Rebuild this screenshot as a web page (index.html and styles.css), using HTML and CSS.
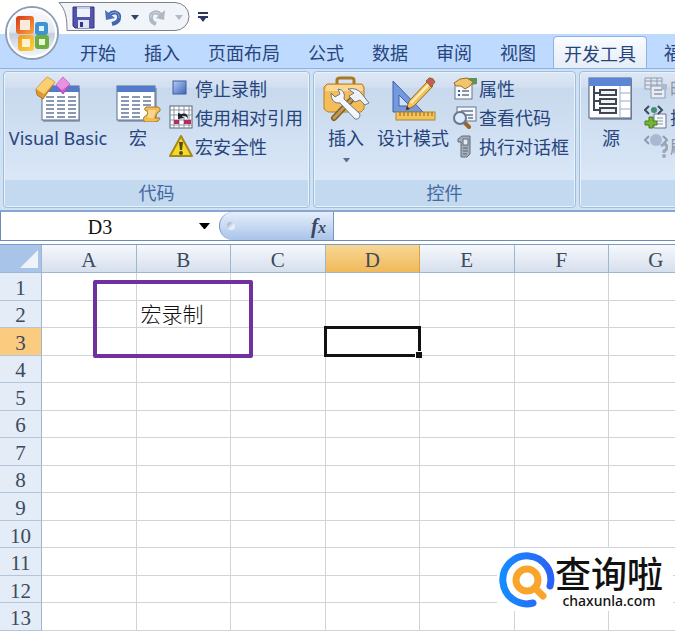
FILE: index.html
```html
<!DOCTYPE html>
<html lang="zh-CN">
<head>
    <meta charset="UTF-8">
    <meta name="viewport" content="width=device-width, initial-scale=1.0">
    <title>宏录制</title>
    <link rel="stylesheet" href="styles.css">
</head>
<body>
    <!-- 标题栏 -->
    <header class="titlebar">
        <button class="office-btn" aria-label="Office">
            <svg width="56" height="56" viewBox="0 0 56 56">
                <defs>
                    <linearGradient id="orb" x1="0" y1="0" x2="0" y2="1">
                        <stop offset="0" stop-color="#fdfdfe"/>
                        <stop offset=".48" stop-color="#e3e8f0"/>
                        <stop offset=".52" stop-color="#c3cedf"/>
                        <stop offset="1" stop-color="#fafcff"/>
                    </linearGradient>
                    <linearGradient id="red" x1="0" y1="0" x2="1" y2="1">
                        <stop offset="0" stop-color="#d9421c"/>
                        <stop offset="1" stop-color="#f59a3c"/>
                    </linearGradient>
                    <linearGradient id="yellow" x1="0" y1="0" x2="1" y2="1">
                        <stop offset="0" stop-color="#f2a024"/>
                        <stop offset="1" stop-color="#fccb3e"/>
                    </linearGradient>
                </defs>
                <circle cx="28" cy="28" r="26" fill="url(#orb)" stroke="#8f9db3" stroke-width="2"/>
                <circle cx="28" cy="28" r="24" fill="none" stroke="#fff" stroke-width="2"/>
                <rect x="14" y="13" width="14" height="14" rx="1" fill="#fbe9dc" stroke="url(#red)" stroke-width="4"/>
                <rect x="33" y="19" width="9" height="9" rx="1" fill="#e2f1fb" stroke="#3d94d0" stroke-width="4"/>
                <rect x="16" y="32" width="12" height="12" rx="1" fill="#fdf2cf" stroke="url(#yellow)" stroke-width="4"/>
                <rect x="33" y="32" width="10" height="10" rx="1" fill="#e9f5dc" stroke="#6fad3f" stroke-width="4"/>
            </svg>
        </button>
        <div class="quick-access">
            <svg class="quick-bg" width="132" height="30" viewBox="0 0 132 30">
                <path d="M1 .5H117A14 14 0 0 1 117 28.500H9C9 17 8 8 1 .5Z" fill="#f1f4f8" stroke="#7c828c"/>
            </svg>
            <button aria-label="保存">
                <svg width="23" height="23" viewBox="0 0 23 23">
                    <path d="M1 1H22V22H3L1 20Z" fill="#5355ad" stroke="#34357f"/>
                    <path d="M5 1H18V11H5Z" fill="#eef2fc"/>
                    <path d="M5 1H18V3H5Z" fill="#c5cdea"/>
                    <path d="M6 14H17V22H6Z" fill="#dfe3f2"/>
                    <path d="M8 16H11V21H8Z" fill="#34357f"/>
                </svg>
            </button>
            <button aria-label="撤消">
                <svg width="20" height="20" viewBox="0 0 20 20">
                    <path d="M6 8C11 3 17 6 16 11C16 14 13 16 9 17" fill="none" stroke="#3f66b0" stroke-width="4"/>
                    <path d="M6 8C11 3 17 6 16 11" fill="none" stroke="#86a8dc" stroke-width="1"/>
                    <path d="M2 3L3 13L12 11Z" fill="#4a72bb"/>
                </svg>
            </button>
            <button aria-label="撤消列表">
                <svg width="8" height="5" viewBox="0 0 8 5"><path d="M0 0H8L4 5Z" fill="#2f4470"/></svg>
            </button>
            <button aria-label="恢复">
                <svg width="20" height="20" viewBox="0 0 20 20">
                    <path d="M14 8C9 3 3 6 4 11C4 14 6 16 9 17" fill="none" stroke="#aeb7c4" stroke-width="4"/>
                    <path d="M14 8C9 3 3 6 4 11" fill="none" stroke="#d4dae3" stroke-width="1"/>
                    <path d="M18 3L17 13L9 11Z" fill="#aeb7c4"/>
                </svg>
            </button>
            <button aria-label="恢复列表">
                <svg width="8" height="5" viewBox="0 0 8 5"><path d="M0 0H8L4 5Z" fill="#b5b9c0"/></svg>
            </button>
        </div>
        <button class="customize" aria-label="自定义快速访问工具栏">
            <svg width="10" height="10" viewBox="0 0 10 10"><path d="M0 0H10V2H0ZM0 4H10V6H8L5 10L2 6H0Z" fill="#2b3760"/></svg>
        </button>
    </header>

    <!-- 选项卡 -->
    <nav class="tabs">
        <button>开始</button>
        <button>插入</button>
        <button>页面布局</button>
        <button>公式</button>
        <button>数据</button>
        <button>审阅</button>
        <button>视图</button>
        <button class="active">开发工具</button>
        <button>福</button>
    </nav>

    <!-- 功能区 -->
    <div class="ribbon">
        <section class="group">
            <div class="group-body">
                <button class="big vb">
                    <svg width="48" height="46" viewBox="0 0 48 46">
                        <path d="M9 12H46V46H9Z" fill="#98a5ba"/>
                        <rect x="8" y="10" width="37" height="34" fill="#fff" stroke="#5b6c8c"/>
                        <rect x="8" y="10" width="37" height="6" fill="#527bcb"/>
                        <path d="M12 21h8M12 25h8M12 29h8M12 33h8M12 37h8M12 41h8M23 21h8M23 25h8M23 29h8M23 33h8M23 37h8M23 41h8M34 21h8M34 25h8M34 29h8M34 33h8M34 37h8M34 41h8" stroke="#8a98b4" stroke-width="2"/>
                        <path d="M2 13L13 1L21 6L9 23L3 19Z" fill="#dc9c2c" stroke="#b27b20"/>
                        <path d="M2 13L13 1L21 6L10 18Z" fill="#fbce74"/>
                        <path d="M22 9L29 1L36 8L29 18Z" fill="#d05cc8" stroke="#b64ab0"/>
                        <path d="M22 9L29 1L36 8L28 14Z" fill="#ea92e2"/>
                    </svg>
                    <span>Visual Basic</span>
                </button>
                <button class="big macro">
                    <svg width="46" height="46" viewBox="0 0 46 46">
                        <path d="M3 12H42V46H3Z" fill="#98a5ba"/>
                        <rect x="2" y="10" width="38" height="34" fill="#fff" stroke="#5b6c8c"/>
                        <rect x="2" y="10" width="38" height="6" fill="#527bcb"/>
                        <path d="M6 21h8M6 25h8M6 29h8M6 33h8M6 37h8M6 41h8M17 21h8M17 25h8M17 29h8M17 33h8M17 37h8M17 41h8M28 21h8M28 25h8M28 29h8" stroke="#8a98b4" stroke-width="2"/>
                        <path d="M31 31H43Q46 32 45 35L42 37L40 42H45Q44 46 40 46H30Q27 44 29 41L32 39L33 35H31Q28 33 31 31Z" fill="#f0bd58" stroke="#a97a27"/>
                        <path d="M33 34H41L38 42H33Z" fill="#fad68c"/>
                    </svg>
                    <span>宏</span>
                </button>
                <div class="stack">
                    <button>
                        <svg width="24" height="24" viewBox="0 0 24 24">
                            <defs><linearGradient id="stop" x1="0" y1="0" x2="1" y2="1"><stop offset="0" stop-color="#b5ccf5"/><stop offset="1" stop-color="#3c65b8"/></linearGradient></defs>
                            <rect x="4" y="5" width="13" height="13" fill="url(#stop)" stroke="#3f5f9f"/>
                        </svg>
                        <span>停止录制</span>
                    </button>
                    <button>
                        <svg width="24" height="24" viewBox="0 0 24 24">
                            <rect x="1" y="1" width="22" height="22" fill="#fff" stroke="#5c6375"/>
                            <path d="M5 1V23M10 1V23M15 1V23M20 1V23M1 5H23M1 10H23M1 15H23M1 20H23" stroke="#8b93a5"/>
                            <path d="M5 15H10V19H5ZM15 15H22V19H15Z" fill="#b72c5d"/>
                            <path d="M9 8V14L15 13L13 11Q17 10 19 14Q19 7 12 9Z" fill="#20232d"/>
                        </svg>
                        <span>使用相对引用</span>
                    </button>
                    <button>
                        <svg width="24" height="24" viewBox="0 0 24 24">
                            <path d="M12 2L23 22H1Z" fill="#f5d828" stroke="#a48a18" stroke-linejoin="round" stroke-width="2"/>
                            <path d="M10 8H14L13 16H11Z" fill="#554d20"/>
                            <circle cx="12" cy="19" r="2" fill="#554d20"/>
                        </svg>
                        <span>宏安全性</span>
                    </button>
                </div>
            </div>
            <h2>代码</h2>
        </section>

        <section class="group">
            <div class="group-body">
                <button class="big insert">
                    <svg width="48" height="46" viewBox="0 0 48 46">
                        <path d="M15 9V4Q15 2 18 2H29Q32 2 32 4V9" fill="none" stroke="#ad7823" stroke-width="3"/>
                        <path d="M5 8H40L42 11V33L39 36H6L2 33V11Z" fill="#f4bd58" stroke="#b57e25"/>
                        <path d="M5 9H40L41 15H3Z" fill="#fbd895"/>
                        <path d="M12 42L31 22" stroke="#7c6233" stroke-width="6" stroke-linecap="round"/>
                        <path d="M12 42L31 22" stroke="#c29a50" stroke-width="3" stroke-linecap="round"/>
                        <path d="M26 13Q35 11 40 18L47 27L43 29L38 24L33 26L27 20L32 17Z" fill="#eef2f7" stroke="#70798a"/>
                        <path d="M9 17L13 21L18 18L16 13Q24 14 22 23L38 38Q38 44 33 43L18 27Q9 28 9 17Z" fill="#f5f7fa" stroke="#70798a"/>
                    </svg>
                    <span>插入</span>
                    <svg class="caret" width="7" height="4" viewBox="0 0 7 4"><path d="M0 0H7L4 4H3Z" fill="#547099"/></svg>
                </button>
                <button class="big design">
                    <svg width="46" height="46" viewBox="0 0 46 46">
                        <path d="M3 5L33 36H3Z" fill="#7599df" stroke="#3f61a7"/>
                        <path d="M9 19L20 30H9Z" fill="#d1e0fa" stroke="#3f61a7"/>
                        <path d="M16 34L19 25L38 5L43 10L24 30Z" fill="#f5c35b" stroke="#8d6a2f"/>
                        <path d="M21 27L40 7" stroke="#fff1bd" stroke-width="2"/>
                        <path d="M36 5L39 2Q43 1 45 6L41 11Z" fill="#c75b57" stroke="#8d6a2f"/>
                        <path d="M16 34L17 30L20 33Z" fill="#38332c"/>
                        <rect x="6" y="36" width="39" height="8" fill="#f4c45c" stroke="#b3842c"/>
                        <path d="M10 36v4M14 36v4M18 36v4M22 36v4M26 36v4M30 36v4M34 36v4M38 36v4M42 36v4" stroke="#8a641e"/>
                    </svg>
                    <span>设计模式</span>
                </button>
                <div class="stack">
                    <button>
                        <svg width="24" height="24" viewBox="0 0 24 24">
                            <rect x="2" y="7" width="17" height="16" fill="#f9fafc" stroke="#67758d"/>
                            <path d="M5 15h2M5 19h2" stroke="#385ca6" stroke-width="2"/>
                            <path d="M9 15h7M9 19h7" stroke="#8995aa" stroke-width="2"/>
                            <path d="M12 2H24V8L18 9Z" fill="#63915a"/>
                            <path d="M1 7L7 3L14 2L20 6L17 10L12 13L8 10H3Z" fill="#f1c46e" stroke="#9c712b"/>
                        </svg>
                        <span>属性</span>
                    </button>
                    <button>
                        <svg width="24" height="24" viewBox="0 0 24 24">
                            <rect x="4" y="2" width="19" height="14" fill="#f3f6fb" stroke="#66758f"/>
                            <path d="M8 6h12M12 10h8M15 13h5" stroke="#8795b1" stroke-width="2"/>
                            <path d="M12 18L16 22" stroke="#98652d" stroke-width="4" stroke-linecap="round"/>
                            <circle cx="7" cy="13" r="6" fill="#dcebfb" stroke="#68778e" stroke-width="2"/>
                        </svg>
                        <span>查看代码</span>
                    </button>
                    <button>
                        <svg width="24" height="24" viewBox="0 0 24 24">
                            <path d="M5 5L9 2H17V20L14 23H8V8H5Z" fill="#a5adb9" stroke="#626c7b"/>
                            <rect x="10" y="5" width="5" height="6" fill="#e6e9ee" stroke="#626c7b"/>
                            <path d="M10 14h5M10 17h5M10 20h4" stroke="#5d6777"/>
                        </svg>
                        <span>执行对话框</span>
                    </button>
                </div>
            </div>
            <h2>控件</h2>
        </section>

        <section class="group xml">
            <div class="group-body">
                <button class="big">
                    <svg width="46" height="46" viewBox="0 0 46 46">
                        <rect x="2" y="3" width="42" height="41" fill="#8996ac"/>
                        <rect x="1" y="2" width="42" height="40" fill="#fff" stroke="#4d5d7c"/>
                        <rect x="1" y="2" width="42" height="8" fill="#5b86d6"/>
                        <path d="M32 10V42M32 17H43M32 25H43M32 33H43" stroke="#9aabc9"/>
                        <path d="M6 10V34H13M6 17H13M6 25H13" fill="none" stroke="#3f4654" stroke-width="2"/>
                        <path d="M12 14H28V19H12ZM12 23H28V28H12ZM12 32H28V37H12Z" fill="#eef2f8" stroke="#3f4654" stroke-width="2"/>
                    </svg>
                    <span>源</span>
                </button>
                <div class="stack">
                    <button disabled>
                        <svg width="24" height="24" viewBox="0 0 24 24">
                            <path d="M1 2H18V13H1Z" fill="#e2e7ef" stroke="#8f9cb0"/>
                            <path d="M1 5H18M1 9H18M7 2V13M13 2V13" stroke="#8f9cb0"/>
                            <path d="M7 10H21V22H7Z" fill="#e9edf3" stroke="#8f9cb0"/>
                            <path d="M17 8H23V14H17Z" fill="#aeb9ca"/>
                            <path d="M10 14h8M10 18h8" stroke="#a2adbf" stroke-width="2"/>
                        </svg>
                        <span>映</span>
                    </button>
                    <button>
                        <svg width="24" height="24" viewBox="0 0 24 24">
                            <path d="M10 9H22V23H10Z" fill="#f5f8fc" stroke="#66758f"/>
                            <path d="M13 13h6M13 16h6M13 19h6" stroke="#8b98ae"/>
                            <path d="M5 1L1 5L5 9M14 1L18 5L14 9" fill="none" stroke="#3e4b60" stroke-width="2"/>
                            <circle cx="10" cy="5" r="3" fill="#468c79"/>
                            <path d="M5 12H9V16H13V20H9V23H5V20H1V16H5Z" fill="#78b52f" stroke="#447a22"/>
                        </svg>
                        <span>扩</span>
                    </button>
                    <button disabled>
                        <svg width="24" height="24" viewBox="0 0 24 24">
                            <path d="M5 2L1 6L5 10M19 2L23 6L19 10" fill="none" stroke="#8f9cb0" stroke-width="2"/>
                            <circle cx="12" cy="6" r="6" fill="#aab8d0"/>
                            <path d="M17 12Q22 8 23 13Q23 16 20 17V19" fill="none" stroke="#9ca8b9" stroke-width="3"/>
                            <circle cx="20" cy="22" r="2" fill="#9ca8b9"/>
                        </svg>
                        <span>刷</span>
                    </button>
                </div>
            </div>
            <h2></h2>
        </section>
    </div>

    <!-- 编辑栏 -->
    <div class="formula-bar">
        <div class="name-box">
            <input type="text" value="D3" aria-label="名称框">
            <button aria-label="名称列表">
                <svg width="11" height="6" viewBox="0 0 11 6"><path d="M0 0H11L6 6H5Z" fill="#000"/></svg>
            </button>
        </div>
        <div class="fx">
            <span class="grip"></span>
            <button aria-label="插入函数">f<small>x</small></button>
        </div>
        <input type="text" class="formula" aria-label="编辑栏">
    </div>

    <!-- 工作表 -->
    <main class="sheet">
        <table>
            <thead>
                <tr>
                    <th class="corner"><svg width="18" height="18" viewBox="0 0 18 18"><path d="M18 0V18H0Z" fill="#eef3fb"/></svg></th>
                    <th>A</th><th>B</th><th>C</th><th class="selected">D</th><th>E</th><th>F</th><th>G</th>
                </tr>
            </thead>
            <tbody>
                <tr><th>1</th><td></td><td></td><td></td><td></td><td></td><td></td><td></td></tr>
                <tr><th>2</th><td></td><td>宏录制</td><td></td><td></td><td></td><td></td><td></td></tr>
                <tr><th class="selected">3</th><td></td><td></td><td></td><td class="current"></td><td></td><td></td><td></td></tr>
                <tr><th>4</th><td></td><td></td><td></td><td></td><td></td><td></td><td></td></tr>
                <tr><th>5</th><td></td><td></td><td></td><td></td><td></td><td></td><td></td></tr>
                <tr><th>6</th><td></td><td></td><td></td><td></td><td></td><td></td><td></td></tr>
                <tr><th>7</th><td></td><td></td><td></td><td></td><td></td><td></td><td></td></tr>
                <tr><th>8</th><td></td><td></td><td></td><td></td><td></td><td></td><td></td></tr>
                <tr><th>9</th><td></td><td></td><td></td><td></td><td></td><td></td><td></td></tr>
                <tr><th>10</th><td></td><td></td><td></td><td></td><td></td><td></td><td></td></tr>
                <tr><th>11</th><td></td><td></td><td></td><td></td><td></td><td></td><td></td></tr>
                <tr><th>12</th><td></td><td></td><td></td><td></td><td></td><td></td><td></td></tr>
                <tr><th>13</th><td></td><td></td><td></td><td></td><td></td><td></td><td></td></tr>
            </tbody>
        </table>
        <div class="highlight"></div>
        <div class="watermark">
            <svg width="56" height="56" viewBox="0 0 56 56">
                <defs><linearGradient id="ring" x1="0" y1="0" x2="1" y2="0"><stop offset="0" stop-color="#168cff"/><stop offset="1" stop-color="#2a62f5"/></linearGradient></defs>
                <path d="M34 51A24 24 0 1 1 51 34" fill="none" stroke="url(#ring)" stroke-width="7" stroke-linecap="round"/>
                <circle cx="28" cy="28" r="11" fill="none" stroke="#f9a52b" stroke-width="7"/>
                <path d="M36 36L44 44" stroke="#f9a52b" stroke-width="7" stroke-linecap="round"/>
            </svg>
            <div class="watermark-text">
                <strong>查询啦</strong>
                <span>chaxunla.com</span>
            </div>
        </div>
    </main>
</body>
</html>
```

FILE: styles.css
```css
/* 通用 */
* {
    box-sizing: border-box;
}

body {
    margin: 0;
    height: 100vh;
    display: flex;
    flex-direction: column;
    overflow: hidden;
    background: #fff;
    color: #27457c;
    font-family: "Noto Sans", "Noto Sans CJK SC", sans-serif;
    font-size: 18px;
    font-weight: 400;
}

button {
    padding: 0;
    border: none;
    background: none;
    color: inherit;
    font: inherit;
    white-space: nowrap;
    cursor: pointer;
}

svg {
    display: block;
    flex: none;
}

/* 标题栏 */
.titlebar {
    position: relative;
    height: 34px;
    flex: none;
    display: flex;
    padding-left: 58px;
}

.office-btn {
    position: absolute;
    left: 4px;
    top: 5px;
    z-index: 2;
}

.quick-access {
    position: relative;
    width: 132px;
    height: 30px;
    margin-top: 2px;
    display: flex;
    align-items: center;
    gap: 8px;
    padding-left: 14px;
}

.quick-access button {
    position: relative;
}

.quick-bg {
    position: absolute;
    left: 0;
    top: 0;
}

.customize {
    margin-left: 8px;
}

/* 选项卡 */
.tabs {
    height: 35px;
    flex: none;
    display: flex;
    gap: 6px;
    padding: 2px 0 0 69px;
    background: #bfdaff;
    border-bottom: 1px solid #8db2e3;
    overflow: hidden;
}

.tabs button {
    flex: none;
    padding: 0 11px;
}

.tabs .active {
    background: linear-gradient(#fafcff, #e4edf8);
    border: 1px solid #8db2e3;
    border-bottom: none;
    border-radius: 4px 4px 0 0;
    padding: 0 10px;
}

/* 功能区 */
.ribbon {
    height: 143px;
    flex: none;
    display: flex;
    gap: 3px;
    padding: 2px 0 2px 3px;
    background: #d0e1f4;
    border-bottom: 2px solid #86a7cf;
    overflow: hidden;
}

.group {
    flex: none;
    display: flex;
    flex-direction: column;
    border: 1px solid #9dbfdb;
    border-radius: 4px;
    box-shadow: inset 0 0 0 1px #e9f2fc;
    background: linear-gradient(#dee8f5 0, #d2dff0 15px, #c8d9ed 16px, #deebfa 100%);
    overflow: hidden;
}

.group-body {
    flex: 1;
    display: flex;
    padding: 4px 6px 0 5px;
}

.group h2 {
    height: 26px;
    margin: 0 1px 1px;
    background: #c2d9f0;
    color: #4668a0;
    font-size: 18px;
    font-weight: 400;
    line-height: 26px;
    text-align: center;
}

.big {
    display: flex;
    flex-direction: column;
    align-items: center;
    line-height: 32px;
}

.vb {
    width: 98px;
}

.macro {
    width: 62px;
}

.insert {
    width: 54px;
}

.design {
    width: 80px;
}

.big .caret {
    margin-top: 4px;
}

.stack {
    display: flex;
    flex-direction: column;
    gap: 1px;
    margin-top: -2px;
}

.stack button {
    height: 28px;
    display: flex;
    align-items: center;
    gap: 2px;
}

.stack button:disabled {
    color: #8c95a5;
}

.xml {
    width: 180px;
}

.xml .big {
    width: 52px;
}

.xml .group-body {
    gap: 7px;
}

/* 编辑栏 */
.formula-bar {
    height: 29px;
    flex: none;
    display: flex;
    background: #fff;
    border-bottom: 1px solid #6c8db8;
    border-left: 1px solid #6c8db8;
}

.formula-bar input {
    min-width: 0;
    border: none;
    outline: none;
    background: none;
}

.name-box {
    width: 218px;
    display: flex;
    align-items: center;
    padding-right: 9px;
}

.name-box input {
    flex: 1;
    padding: 2px 0 0;
    color: #111;
    font-family: "Liberation Serif", serif;
    font-size: 20px;
    text-align: center;
}

.fx {
    width: 115px;
    display: flex;
    align-items: center;
    justify-content: space-between;
    padding: 0 7px;
    border: 1px solid #7695c2;
    border-width: 0 1px;
    border-radius: 14px 0 0 14px;
    background: linear-gradient(#e6effc, #a9c3ea);
}

.grip {
    width: 8px;
    height: 8px;
    border-radius: 4px;
    background: linear-gradient(135deg, #8f9db5, #e6eefb 60%);
}

.fx button {
    color: #39475f;
    font: italic bold 21px "Liberation Serif", serif;
}

.fx small {
    font-size: 16px;
}

.formula {
    flex: 1;
}

/* 工作表 */
.sheet {
    position: relative;
    flex: 1;
    min-height: 0;
    margin-top: 3px;
    border-top: 1px solid #7f9cc0;
    overflow: hidden;
}

.sheet table {
    width: calc(42px + 98vw);
    height: 100%;
    table-layout: fixed;
    border-collapse: separate;
    border-spacing: 0;
    font-family: "Liberation Serif", "Noto Sans CJK SC", serif;
    font-size: 21px;
    line-height: 22px;
}

.sheet th,
.sheet td {
    padding: 3px 0 0;
    border-right: 1px solid #d0d3da;
    border-bottom: 1px solid #d0d3da;
}

.sheet th {
    color: #3b4a5c;
    font-weight: normal;
}

.sheet thead th {
    height: 28px;
    background: linear-gradient(#f6f9fd, #d6dfed);
    border-right-color: #9eb6ce;
    border-bottom-color: #9eb6ce;
}

.sheet tbody th {
    background: #e4ecf7;
    border-right-color: #9eb6ce;
    border-bottom-color: #b3c5db;
}

.sheet thead .corner {
    width: 42px;
    padding: 3px;
    background: #a9c4e9;
}

.corner svg {
    margin-left: auto;
}

.sheet thead .selected {
    background: linear-gradient(#f8d795, #f0b95a);
    border-right-color: #d9a04a;
}

.sheet tbody .selected {
    background: #fbcc80;
}

.sheet td {
    padding-left: 4px;
    color: #111;
    font-weight: 300;
    white-space: nowrap;
}

/* 当前单元格 */
.current {
    position: relative;
}

.current::before {
    content: "";
    position: absolute;
    inset: -2px;
    border: 3px solid #111;
}

.current::after {
    content: "";
    position: absolute;
    right: -3px;
    bottom: -3px;
    width: 6px;
    height: 6px;
    background: #111;
    border: 1px solid #fff;
    border-width: 1px 0 0 1px;
}

/* 紫色标注框 */
.highlight {
    position: absolute;
    left: 93px;
    top: 35px;
    width: 160px;
    height: 78px;
    border: 4px solid #7030a0;
    border-radius: 2px;
}

/* 水印 */
.watermark {
    position: absolute;
    right: 2px;
    bottom: 20px;
    display: flex;
    align-items: center;
    padding: 0 10px 0 2px;
    background: #fff;
    color: #111;
}

.watermark-text {
    display: flex;
    flex-direction: column;
    align-items: center;
    padding: 9px 0 2px;
}

.watermark strong {
    font-size: 36px;
    font-weight: 500;
    line-height: 36px;
}

.watermark span {
    font-size: 14px;
    font-weight: 500;
    line-height: 16px;
}
```
